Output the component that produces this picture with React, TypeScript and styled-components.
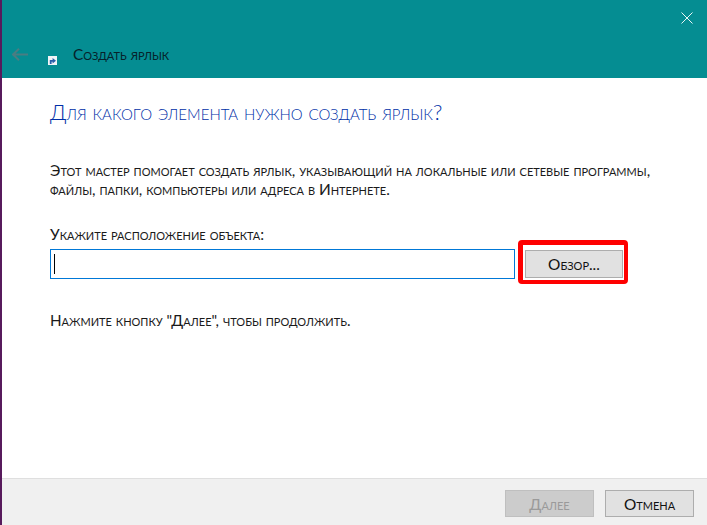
import React from 'react';
import styled, { createGlobalStyle } from 'styled-components';

const GlobalStyle = createGlobalStyle`
    html, body {
        margin: 0;
        padding: 0;
        background: #fff;
    }
    body {
        font-family: "Lato", "Liberation Sans", sans-serif;
        font-variant: small-caps;
    }
`;

const Frame = styled.div`
    width: 707px;
    height: 525px;
    display: flex;
    box-sizing: border-box;
    border-left: 2px solid #571a5c;
    overflow: hidden;
`;

const Window = styled.div`
    flex: 1;
    display: flex;
    flex-direction: column;
    min-width: 0;
`;

const TitleBar = styled.div`
    height: 78px;
    background: #058d92;
    display: flex;
    flex-direction: column;
    flex-shrink: 0;
`;

const CloseRow = styled.div`
    height: 38px;
    display: flex;
    justify-content: flex-end;
    padding: 12px 14px 0 0;
    box-sizing: border-box;
`;

const NavRow = styled.div`
    display: flex;
    align-items: flex-start;
    padding-left: 10px;
`;

const BackIcon = styled.svg`
    width: 16px;
    height: 13px;
    margin: 10px 20px 0 0;
`;

const ShortcutIcon = styled.svg`
    width: 9px;
    height: 9px;
    margin: 18px 16px 0 0;
`;

const TitleText = styled.span`
    font-size: 15.4px;
    color: #06222a;
    line-height: 20px;
    margin-top: 6px;
`;

const Content = styled.div`
    flex: 1;
    padding: 21px 0 0 48px;
    display: flex;
    flex-direction: column;
`;

const Heading = styled.h1`
    margin: 0 0 36px;
    font-size: 21.6px;
    font-weight: 300;
    line-height: 26px;
    color: #002fa7;
`;

const Description = styled.p`
    margin: 0 0 26px;
    font-size: 15.4px;
    line-height: 19px;
    color: #1a1a1a;
`;

const FieldLabel = styled.label`
    font-size: 15.4px;
    line-height: 19px;
    color: #1a1a1a;
`;

const FieldRow = styled.div`
    display: flex;
    align-items: flex-start;
    margin-top: -4px;
`;

const PathInput = styled.div`
    width: 465px;
    height: 30px;
    margin-top: 9px;
    box-sizing: border-box;
    border: 1px solid #0078d7;
    padding: 4px 0 0 3px;
`;

const Caret = styled.div`
    width: 1px;
    height: 20px;
    background: #000;
`;

const Highlight = styled.div`
    margin-left: 3px;
    border-style: solid;
    border-color: #fe0000;
    border-width: 5px 4px 4px 5px;
    border-radius: 4px;
    padding: 5px 1px 2px 2px;
    display: flex;
`;

const Button = styled.div<{ $disabled?: boolean }>`
    width: 89px;
    height: 27px;
    box-sizing: border-box;
    border: 1px solid ${(p) => (p.$disabled ? '#bfbfbf' : '#adadad')};
    background: ${(p) => (p.$disabled ? '#cccccc' : '#e1e1e1')};
    color: ${(p) => (p.$disabled ? '#9a9a9a' : '#111')};
    font-size: 15.4px;
    display: flex;
    align-items: center;
    justify-content: center;
`;

const BrowseButton = styled(Button)`
    width: 98px;
    height: 28px;
`;

const Hint = styled.p`
    margin: 27px 0 0;
    font-size: 15.2px;
    line-height: 19px;
    color: #1a1a1a;
`;

const Footer = styled.div`
    height: 47px;
    flex-shrink: 0;
    box-sizing: border-box;
    background: #f0f0f0;
    border-top: 1px solid #dfdfdf;
    display: flex;
    justify-content: flex-end;
    align-items: flex-start;
    gap: 11px;
    padding: 11px 13px 0 0;
`;

export default function App() {
    return (
        <>
            <GlobalStyle />
            <Frame>
                <Window>
                    <TitleBar>
                        <CloseRow>
                            <svg width="12" height="12" viewBox="0 0 12 12">
                                <path d="M0.5 0.5L11.5 11.5M11.5 0.5L0.5 11.5" stroke="#e8f5f5" strokeWidth="1" fill="none" />
                            </svg>
                        </CloseRow>
                        <NavRow>
                            <BackIcon viewBox="0 0 16 13">
                                <path d="M1 6.5H16M7 0.8L1 6.5l6 5.7" stroke="#4a7d82" strokeWidth="2" fill="none" />
                            </BackIcon>
                            <ShortcutIcon viewBox="0 0 9 9">
                                <rect width="9" height="9" fill="#f1f4f7" />
                                <path d="M1.8 8V4H4.6V2L8 4.8L4.6 7.4V5.8H3.6V8Z" fill="#2a5fa8" />
                            </ShortcutIcon>
                            <TitleText>Создать ярлык</TitleText>
                        </NavRow>
                    </TitleBar>
                    <Content>
                        <Heading>Для какого элемента нужно создать ярлык?</Heading>
                        <Description>
                            Этот мастер помогает создать ярлык, указывающий на локальные или сетевые программы,
                            <br />
                            файлы, папки, компьютеры или адреса в Интернете.
                        </Description>
                        <FieldLabel>Укажите расположение объекта:</FieldLabel>
                        <FieldRow>
                            <PathInput>
                                <Caret />
                            </PathInput>
                            <Highlight>
                                <BrowseButton>Обзор...</BrowseButton>
                            </Highlight>
                        </FieldRow>
                        <Hint>Нажмите кнопку "Далее", чтобы продолжить.</Hint>
                    </Content>
                    <Footer>
                        <Button $disabled>Далее</Button>
                        <Button>Отмена</Button>
                    </Footer>
                </Window>
            </Frame>
        </>
    );
}
